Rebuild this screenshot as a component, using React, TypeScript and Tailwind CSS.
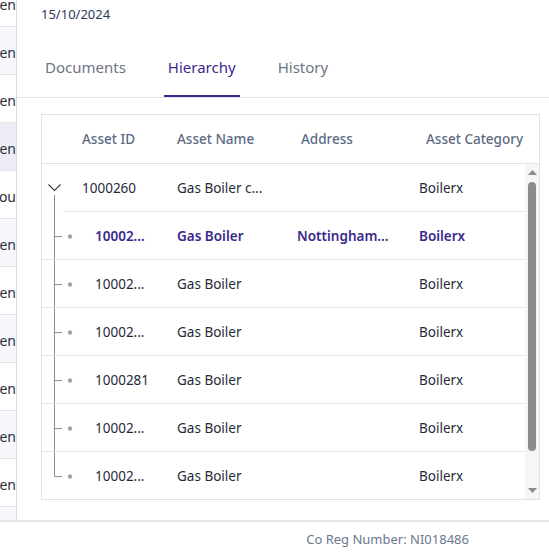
import { ReactNode } from 'react';

const stripRows = [
  { t: 'Open', bg: 'bg-white' },
  { t: 'Open', bg: 'bg-[#f7f8fb]' },
  { t: 'Open', bg: 'bg-white' },
  { t: 'Open', bg: 'bg-[#ededf7]' },
  { t: 'Pending you', bg: 'bg-white' },
  { t: 'Open', bg: 'bg-[#f7f8fb]' },
  { t: 'Open', bg: 'bg-white' },
  { t: 'Open', bg: 'bg-[#f7f8fb]' },
  { t: 'Open', bg: 'bg-white' },
  { t: 'Open', bg: 'bg-[#f7f8fb]' },
  { t: 'Open', bg: 'bg-white' },
  { t: 'Open', bg: 'bg-[#f7f8fb]' },
];

type Row = { id: string; name: string; address: string; category: string; kind: 'parent' | 'child' | 'last'; active?: boolean };

const rows: Row[] = [
  { id: '1000260', name: 'Gas Boiler c...', address: '', category: 'Boilerx', kind: 'parent' },
  { id: '10002...', name: 'Gas Boiler', address: 'Nottingham...', category: 'Boilerx', kind: 'child', active: true },
  { id: '10002...', name: 'Gas Boiler', address: '', category: 'Boilerx', kind: 'child' },
  { id: '10002...', name: 'Gas Boiler', address: '', category: 'Boilerx', kind: 'child' },
  { id: '1000281', name: 'Gas Boiler', address: '', category: 'Boilerx', kind: 'child' },
  { id: '10002...', name: 'Gas Boiler', address: '', category: 'Boilerx', kind: 'child' },
  { id: '10002...', name: 'Gas Boiler', address: '', category: 'Boilerx', kind: 'last' },
];

function TreeCell({ kind }: { kind: Row['kind'] }) {
  return (
    <svg width="40" height="48" viewBox="0 0 40 48" className="shrink-0 overflow-visible">
      {kind === 'parent' ? (
        <>
          <path d="M6.5 20.5 L12.5 26.5 L18.5 20.5" fill="none" stroke="#3a3f4c" strokeWidth="1.2" />
          <line x1="12.5" y1="31" x2="12.5" y2="49" stroke="#8c8c8c" strokeWidth="1" />
        </>
      ) : (
        <>
          <line x1="12.5" y1="0" x2="12.5" y2={kind === 'last' ? 24.5 : 49} stroke="#8c8c8c" strokeWidth="1" />
          <line x1="12.5" y1="24.5" x2="20" y2="24.5" stroke="#8c8c8c" strokeWidth="1" />
          <circle cx="28" cy="24.5" r="2.2" fill="#a3a3a3" />
        </>
      )}
    </svg>
  );
}

function Tab({ children, active }: { children: ReactNode; active?: boolean }) {
  return (
    <div
      className={
        active
          ? 'h-[56px] px-1 pb-[2px] flex items-center border-b-2 border-[#3b2a8c] text-[#3b2a8c] -mb-px'
          : 'h-[56px] px-1 pb-[3px] flex items-center text-[#6b7483]'
      }
    >
      {children}
    </div>
  );
}

export default function App() {
  return (
    <div className="w-[549px] h-[558px] overflow-hidden bg-white flex flex-col text-[#262b38]" style={{ fontFamily: '"Noto Sans", "Open Sans", sans-serif' }}>
      <div className="h-[520px] flex">
        <div className="w-[17px] shrink-0 border-r border-[#d9d9df] overflow-hidden">
          <div className="-mt-[21px]">
            {stripRows.map((r, i) => (
              <div key={i} className={`h-[48px] border-b border-[#e4e5ea] flex items-center justify-end whitespace-nowrap text-[14px] text-[#2b2f3a] ${r.bg}`}>
                <span className="pt-[4px]">{r.t}</span>
              </div>
            ))}
          </div>
        </div>

        <div className="flex-1 flex flex-col">
          <div className="pl-6 pt-[5px] h-[41px] text-[13px] text-[#2e3a59]">15/10/2024</div>

          <div className="flex gap-[34px] pl-6 border-b border-[#e3e3e8] text-[15px]">
            <Tab>Documents</Tab>
            <Tab active>Hierarchy</Tab>
            <Tab>History</Tab>
          </div>

          <div className="mt-4 ml-6 mr-[9px] h-[386px] border border-[#e1e2e8] flex flex-col">
            <div className="h-[49px] shrink-0 border-b border-[#e1e2e8] grid grid-cols-[40px_95px_124px_125px_1fr] items-center text-[13.5px] font-medium text-[#5c6b84]">
              <div />
              <div>Asset ID</div>
              <div>Asset Name</div>
              <div>Address</div>
              <div className="whitespace-nowrap">Asset Category</div>
            </div>

            <div className="flex-1 flex overflow-hidden">
              <div className="flex-1">
                {rows.map((r, i) => (
                  <div key={i} className="relative h-[48px]">
                    <div className={`h-[48px] flex items-center text-[13.5px] ${r.active ? 'text-[#3b2a8c] font-semibold' : ''}`}>
                      <TreeCell kind={r.kind} />
                      <div className={r.kind === 'parent' ? 'w-[95px] shrink-0' : 'w-[95px] shrink-0 pl-[13px]'}>{r.id}</div>
                      <div className="w-[120px] shrink-0 whitespace-nowrap">{r.name}</div>
                      <div className="w-[122px] shrink-0 whitespace-nowrap">{r.address}</div>
                      <div>{r.category}</div>
                    </div>
                    {i < rows.length - 1 && (
                      <div className={`absolute bottom-0 right-0 h-px bg-[#e4e5ea] ${r.kind === 'parent' ? 'left-[21px]' : 'left-0'}`} />
                    )}
                  </div>
                ))}
              </div>

              <div className="w-[14px] shrink-0 bg-[#f6f6f8] flex flex-col items-center pt-[6px] pb-[6px]">
                <svg width="9" height="5" viewBox="0 0 9 5"><path d="M0 5 L4.5 0 L9 5 Z" fill="#8c8c8c" /></svg>
                <div className="mt-[7px] w-[8px] h-[269px] rounded-full bg-[#8c8c8c]" />
                <div className="flex-1" />
                <svg width="9" height="5" viewBox="0 0 9 5"><path d="M0 0 L9 0 L4.5 5 Z" fill="#8c8c8c" /></svg>
              </div>
            </div>
          </div>
        </div>
      </div>

      <div className="h-[38px] border-t-2 border-[#e4e4ea] flex items-center justify-end pr-[80px] text-[13px] text-[#6b7890]">
        Co Reg Number: NI018486
      </div>
    </div>
  );
}
